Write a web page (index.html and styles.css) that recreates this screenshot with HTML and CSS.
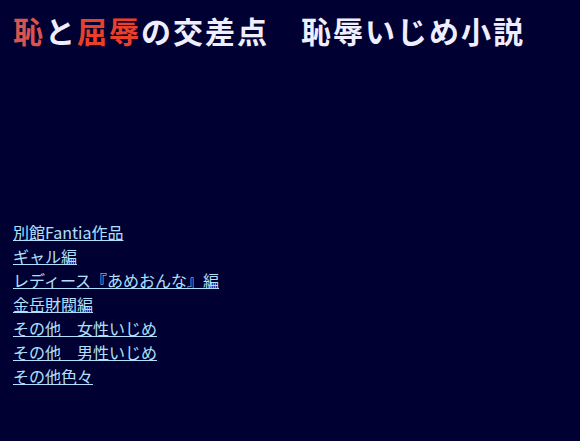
FILE: index.html
```html
<!DOCTYPE html>
<html lang="ja">
<head>
<meta charset="utf-8">
<title>恥と屈辱の交差点　恥辱いじめ小説</title>
<link rel="stylesheet" href="styles.css">
</head>
<body>
<header class="site-header">
  <h1 class="site-title"><span class="red1">恥</span>と<span class="red2">屈辱</span>の交差点　恥辱いじめ小説</h1>
</header>
<nav class="menu">
  <ul class="menu-list">
    <li><a href="#">別館Fantia作品</a></li>
    <li><a href="#">ギャル編</a></li>
    <li><a href="#">レディース『あめおんな』編</a></li>
    <li><a href="#">金岳財閥編</a></li>
    <li><a href="#">その他　女性いじめ</a></li>
    <li><a href="#">その他　男性いじめ</a></li>
    <li><a href="#">その他色々</a></li>
  </ul>
</nav>
</body>
</html>
```
FILE: styles.css
```css
html, body {
  margin: 0;
  padding: 0;
  background: #000033;
}
body {
  padding: 0 13px;
  font-family: "Noto Sans CJK JP", "Noto Sans", sans-serif;
  color: #eeeeff;
}
.site-header {
  padding-top: 10px;
  height: 220px;
  box-sizing: border-box;
}
.site-title {
  margin: 0;
  font-size: 30px;
  line-height: 40px;
  font-weight: bold;
  color: #eeeeff;
  letter-spacing: 2px;
}
.red1 { color: #d9544f; }
.red2 { color: #e8402a; }
.menu-list {
  list-style: none;
  margin: 0;
  padding: 0;
}
.menu-list li {
  font-size: 16px;
  line-height: 24px;
}
.menu-list a {
  color: #b0e0ff;
  text-decoration: underline;
}
```
